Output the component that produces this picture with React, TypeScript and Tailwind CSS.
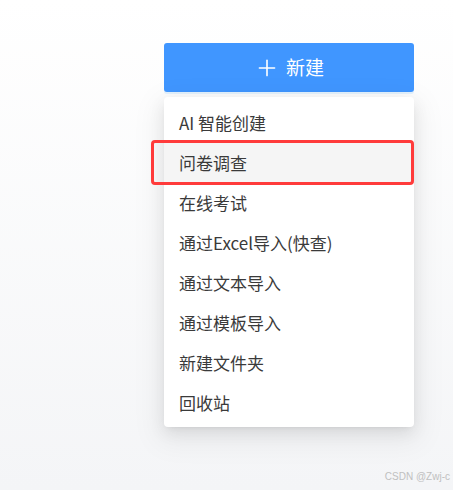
import { Plus } from 'lucide-react';

const items = [
  'AI 智能创建',
  '问卷调查',
  '在线考试',
  '通过Excel导入(快查)',
  '通过文本导入',
  '通过模板导入',
  '新建文件夹',
  '回收站',
];

export default function App() {
  return (
    <div
      className="relative h-[490px] w-full overflow-hidden bg-gradient-to-b from-white to-[#f4f5f7] pl-[164px] pt-[43px]"
      style={{ fontFamily: '"Noto Sans CJK SC", "Noto Sans", sans-serif' }}
    >
      <div className="w-[250px]">
        <button className="flex h-[49px] w-full items-center justify-center gap-[8px] rounded-[3px] bg-[#4096ff] text-[19px] text-white shadow-[0_2px_0_rgba(5,145,255,0.1)]">
          <Plus size={26} strokeWidth={1.5} className="-mr-[2px]" />
          <span>新建</span>
        </button>

        <div className="mt-[5px] rounded-[4px] bg-white pb-[4px] pt-[6px] shadow-[0_6px_16px_rgba(0,0,0,0.08),0_3px_6px_-4px_rgba(0,0,0,0.12),0_9px_28px_8px_rgba(0,0,0,0.05)]">
          {items.map((label, i) => (
            <div
              key={label}
              className={`relative flex h-[40px] items-center pl-[15px] text-[17px] text-[#3a3a3a] ${
                i === 1 ? 'bg-[#f5f5f5]' : ''
              }`}
            >
              {label}
              {i === 1 && (
                <div className="pointer-events-none absolute -left-[13px] -top-[3px] h-[45px] w-[263px] rounded-[4px] border-[3px] border-[#ff3b3b]" />
              )}
            </div>
          ))}
        </div>
      </div>

      <div
        className="absolute bottom-[6px] right-[3px] text-[10px] text-[#c0c0c0]"
        style={{ fontFamily: '"Liberation Sans", Arial, sans-serif' }}
      >
        CSDN @Zwj-c
      </div>
    </div>
  );
}
